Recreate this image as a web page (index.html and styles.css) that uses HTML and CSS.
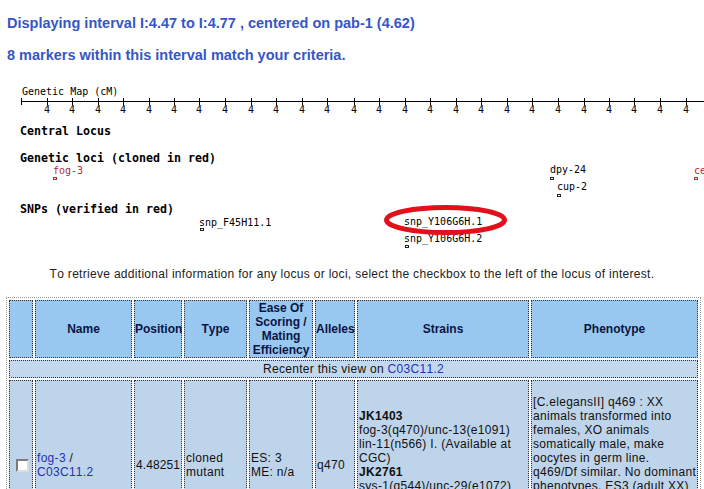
FILE: index.html
```html
<!DOCTYPE html>
<html>
<head>
<meta charset="utf-8">
<title>Genetic map interval</title>
<link rel="stylesheet" href="styles.css">
</head>
<body>
<h1 class="title">Displaying interval I:4.47 to I:4.77 , centered on pab-1 (4.62)</h1>
<h2 class="title sub">8 markers within this interval match your criteria.</h2>

<svg class="map" width="704" height="175" viewBox="0 0 704 175">
  <text class="small" x="22" y="15">Genetic Map (cM)</text>
  <path class="axis" d="M21 21.5H704M21.5 18V25M47.5 18V25M72.5 18V25M98.5 18V25M123.5 18V25M149.5 18V25M174.5 18V25M199.5 18V25M225.5 18V25M251.5 18V25M276.5 18V25M302.5 18V25M327.5 18V25M354.5 18V25M379.5 18V25M405.5 18V25M430.5 18V25M456.5 18V25M481.5 18V25M507.5 18V25M532.5 18V25M558.5 18V25M584.5 18V25M609.5 18V25M634.5 18V25M660.5 18V25M686.5 18V25"/>
  <g class="small ticks">
    <text x="47" y="33">4</text><text x="72" y="33">4</text><text x="98" y="33">4</text><text x="123" y="33">4</text>
    <text x="149" y="33">4</text><text x="174" y="33">4</text><text x="199" y="33">4</text><text x="225" y="33">4</text>
    <text x="251" y="33">4</text><text x="276" y="33">4</text><text x="302" y="33">4</text><text x="327" y="33">4</text>
    <text x="354" y="33">4</text><text x="379" y="33">4</text><text x="405" y="33">4</text><text x="430" y="33">4</text>
    <text x="456" y="33">4</text><text x="481" y="33">4</text><text x="507" y="33">4</text><text x="532" y="33">4</text>
    <text x="558" y="33">4</text><text x="584" y="33">4</text><text x="609" y="33">4</text><text x="634" y="33">4</text>
    <text x="660" y="33">4</text><text x="686" y="33">4</text>
  </g>

  <text class="label" x="20" y="55">Central Locus</text>

  <text class="label" x="20" y="82">Genetic loci (cloned in red)</text>
  <text class="small cloned" x="53" y="93.5">fog-3</text>
  <rect class="mark cloned-mark" x="53.5" y="97.5" width="3" height="2"/>
  <text class="small" x="550" y="93">dpy-24</text>
  <rect class="mark" x="550.5" y="97.5" width="3" height="2"/>
  <text class="small" x="557" y="110">cup-2</text>
  <rect class="mark" x="557.5" y="114.5" width="3" height="2"/>
  <text class="small cloned" x="694" y="93.5">ce</text>
  <rect class="mark cloned-mark" x="694.5" y="97.5" width="3" height="2"/>

  <text class="label" x="20" y="133">SNPs (verified in red)</text>
  <text class="small" x="199" y="145.5">snp_F45H11.1</text>
  <rect class="mark" x="200.5" y="148.5" width="3" height="2"/>
  <text class="small" x="404" y="145">snp_Y106G6H.1</text>
  <rect class="mark" x="405.5" y="148.5" width="3" height="2"/>
  <text class="small" x="404" y="161.5">snp_Y106G6H.2</text>
  <rect class="mark" x="405.5" y="165.5" width="3" height="2"/>

  <ellipse class="circle" cx="445.5" cy="140" rx="59" ry="12.5"/>
</svg>

<p class="hint">To retrieve additional information for any locus or loci, select the checkbox to the left of the locus of interest.</p>

<table class="loci">
  <thead>
    <tr>
      <th class="c-check"></th>
      <th class="c-name">Name</th>
      <th class="c-pos">Position</th>
      <th class="c-type">Type</th>
      <th class="c-ease">Ease Of Scoring / Mating Efficiency</th>
      <th class="c-allele">Alleles</th>
      <th class="c-strain">Strains</th>
      <th class="c-pheno">Phenotype</th>
    </tr>
  </thead>
  <tbody>
    <tr class="recenter">
      <td colspan="8">Recenter this view on <a href="#">C03C11.2</a></td>
    </tr>
    <tr class="locus">
      <td class="check-cell"><input class="pick" type="checkbox"></td>
      <td><a href="#">fog-3</a> /<br><a href="#">C03C11.2</a></td>
      <td class="num">4.48251</td>
      <td>cloned mutant</td>
      <td>ES: 3<br>ME: n/a</td>
      <td>q470</td>
      <td><b>JK1403</b><br>fog-3(q470)/unc-13(e1091) lin-11(n566) I. (Available at CGC)<br><b>JK2761</b><br>sys-1(q544)/unc-29(e1072) lin-11(n566) I. (Available at CGC)</td>
      <td class="pheno">[C.elegansII] q469 : XX animals transformed into females, XO animals somatically male, make oocytes in germ line. q469/Df similar. No dominant phenotypes. ES3 (adult XX) ES0 (XO). Complete penetrance at all temperatures. [JK]</td>
    </tr>
  </tbody>
</table>
</body>
</html>
```

FILE: styles.css
```css
html, body {
  margin: 0;
  padding: 0;
  background: #ffffff;
}

body {
  font-family: "Liberation Sans", Arial, sans-serif;
  font-kerning: none;
  color: #111111;
  width: 704px;
}

.title {
  margin: 14px 0 0 7px;
  font-size: 14.5px;
  line-height: 18px;
  font-weight: bold;
  color: #3656c8;
}

.sub {
  margin-top: 14px;
}

.map {
  display: block;
  margin-top: 16px;
}

.map text {
  font-family: "DejaVu Sans Mono", "Liberation Mono", monospace;
  fill: #000000;
}

.map .small {
  font-size: 10px;
}

.map .ticks text {
  text-anchor: middle;
}

.map .label {
  font-size: 11.63px;
  font-weight: bold;
}

.map .cloned {
  fill: #b8283a;
}

.axis {
  stroke: #000000;
  stroke-width: 1;
  fill: none;
}

.mark {
  fill: #ffffff;
  stroke: #222222;
  stroke-width: 1;
}

.cloned-mark {
  stroke: #b8283a;
}

.circle {
  fill: none;
  stroke: #e3101c;
  stroke-width: 5;
}

.hint {
  margin: 12px 0 0;
  font-size: 12px;
  line-height: 14px;
  letter-spacing: 0.3px;
  text-align: center;
  color: #222222;
}

.loci {
  margin: 16px 0 0 6px;
  width: 695px;
  table-layout: fixed;
  border-collapse: separate;
  border-spacing: 2px;
  border: 1px dotted #9a9a9a;
  font-size: 12px;
  line-height: normal;
}

.loci th,
.loci td {
  box-sizing: border-box;
  border: 1px dotted #333344;
  padding: 1px;
}

.loci td {
  letter-spacing: 0.3px;
}

.loci th {
  padding: 0;
  line-height: 14px;
  background: #98c8ef;
  color: #0b1445;
  font-weight: bold;
  text-align: center;
}

.c-check { width: 24px; }
.c-name { width: 97px; }
.c-pos { width: 48px; }
.c-type { width: 63px; }
.c-ease { width: 64px; }
.c-allele { width: 40px; }
.c-strain { width: 172px; }
.c-pheno { width: 167px; }

.loci a {
  color: #2233b4;
  text-decoration: none;
}

.recenter td {
  background: #c3d8ec;
  text-align: center;
  color: #111111;
}

.locus td {
  height: 170px;
  background: #bed4ea;
  vertical-align: middle;
  text-align: left;
}

.locus .num {
  letter-spacing: 0.1px;
}

.locus .pheno {
  padding-right: 0.5px;
}

.check-cell {
  text-align: left;
}

.pick {
  -webkit-appearance: none;
  appearance: none;
  display: block;
  box-sizing: border-box;
  width: 13px;
  height: 13px;
  margin: 0 0 0 5px;
  border: 2px solid;
  border-color: #7c7c7c #dcdcdc #dcdcdc #7c7c7c;
  background: #ffffff;
}
```
